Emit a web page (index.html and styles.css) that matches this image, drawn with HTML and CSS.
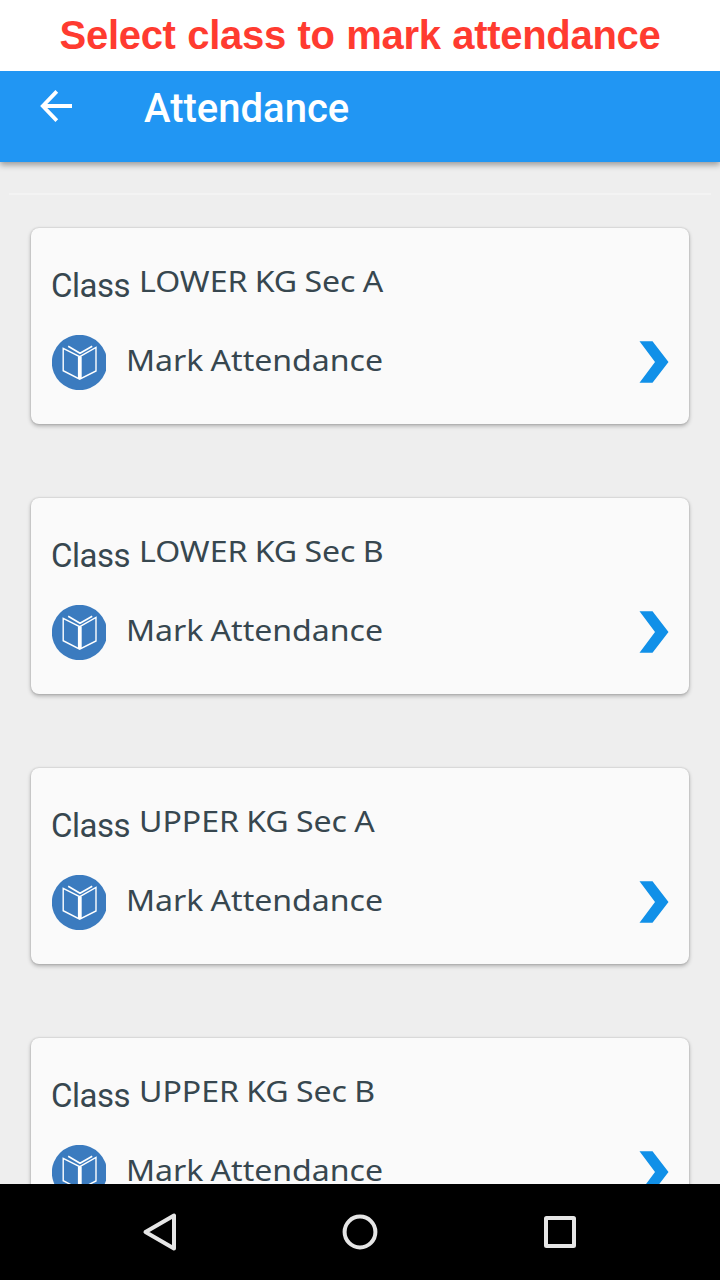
FILE: index.html
```html
<!DOCTYPE html>
<html lang="en">
<head>
<meta charset="utf-8">
<title>Attendance</title>
<link rel="stylesheet" href="styles.css">
</head>
<body>
<svg width="0" height="0" class="symbols" aria-hidden="true">
  <symbol id="book" viewBox="0 0 54 55">
    <circle cx="27.5" cy="27.5" r="27.7" fill="#3b7bbf"/>
    <path d="M11.2 13.3 27.7 21.6 44 12.4V36L27.7 44.2 11.2 35.7Z" fill="none" stroke="#fff" stroke-width="1.4"/>
    <path d="M16.2 11.2 28 18.2 40.2 11.2" fill="none" stroke="#fff" stroke-width="1.6"/>
    <path d="M27.8 21.5V44" stroke="#fff" stroke-width="3.8"/>
  </symbol>
  <symbol id="chevron" viewBox="0 0 30 42">
    <path d="M.5.2H13.5L29.5 21 13.5 41.8H.5L16 21Z" fill="#1190e8"/>
  </symbol>
</svg>
<div class="screen">
  <h1 class="caption"><span>Select class to mark attendance</span></h1>
  <header class="appbar">
    <svg class="back" viewBox="0 0 32 32"><path d="M32 16H3M16.8 1.4 2.8 16l14 14.6" fill="none" stroke="#fff" stroke-width="3.8"/></svg>
    <h2 class="title">Attendance</h2>
  </header>
  <main class="list">
    <hr class="rule">
    <section class="card">
      <div class="class-row"><span class="label">Class</span><span class="name">LOWER KG Sec A</span></div>
      <div class="action"><svg class="book"><use href="#book"/></svg><span class="text">Mark Attendance</span><svg class="chevron"><use href="#chevron"/></svg></div>
    </section>
    <section class="card">
      <div class="class-row"><span class="label">Class</span><span class="name">LOWER KG Sec B</span></div>
      <div class="action"><svg class="book"><use href="#book"/></svg><span class="text">Mark Attendance</span><svg class="chevron"><use href="#chevron"/></svg></div>
    </section>
    <section class="card">
      <div class="class-row"><span class="label">Class</span><span class="name">UPPER KG Sec A</span></div>
      <div class="action"><svg class="book"><use href="#book"/></svg><span class="text">Mark Attendance</span><svg class="chevron"><use href="#chevron"/></svg></div>
    </section>
    <section class="card">
      <div class="class-row"><span class="label">Class</span><span class="name">UPPER KG Sec B</span></div>
      <div class="action"><svg class="book"><use href="#book"/></svg><span class="text">Mark Attendance</span><svg class="chevron"><use href="#chevron"/></svg></div>
    </section>
  </main>
  <nav class="navbar">
    <svg viewBox="0 0 40 40"><path d="M34 3.5V36.5L5.5 20Z"/></svg>
    <svg viewBox="0 0 40 40"><circle cx="20" cy="20" r="15.4"/></svg>
    <svg viewBox="0 0 40 40"><rect x="6" y="6" width="28" height="28" rx=".5"/></svg>
  </nav>
</div>
</body>
</html>
```
FILE: styles.css
```css
* { box-sizing: border-box; }
body { margin: 0; }
.symbols { display: none; }
.screen {
  display: flex;
  flex-direction: column;
  width: 720px;
  height: 1280px;
  overflow: hidden;
  background: #eee;
}
.caption {
  flex: none;
  height: 71px;
  margin: 0;
  background: #fff;
  color: #ff3b30;
  font: bold 40px/71px "Liberation Sans", sans-serif;
  letter-spacing: -.3px;
  word-spacing: .8px;
  text-align: center;
  white-space: nowrap;
  z-index: 2;
}
.appbar {
  display: flex;
  flex: none;
  gap: 72px;
  height: 91px;
  padding: 19px 40px 0;
  background: #2196f3;
  box-shadow: 0 3px 6px rgba(0, 0, 0, .35);
  z-index: 1;
}
.back { width: 32px; height: 32px; }
.title {
  margin: 0;
  color: #fff;
  font: 500 40px/38px Roboto, sans-serif;
}
.list {
  flex: 1;
  min-height: 0;
  overflow: hidden;
  padding-top: 31px;
}
.rule {
  height: 2px;
  margin: 0 9px 33px;
  border: 0;
  background: #f3f3f3;
}
.card {
  height: 196px;
  margin: 0 31px 74px;
  padding: 34px 20px 0;
  border-radius: 8px;
  background: #fafafa;
  box-shadow: 0 2px 4px rgba(0, 0, 0, .28), 0 0 2px rgba(0, 0, 0, .2);
  color: #37474f;
}
.class-row {
  display: flex;
  height: 40px;
  gap: 10px;
  white-space: nowrap;
}
.label {
  width: 78px;
  font: 33px/47px Roboto, sans-serif;
  letter-spacing: -.5px;
}
.name, .text {
  font: 29px/38px "Noto Sans", sans-serif;
  word-spacing: -1px;
  white-space: nowrap;
  transform: scaleX(1.105);
  transform-origin: left;
}
.action {
  display: flex;
  margin-top: 33px;
}
.book { width: 54px; height: 55px; margin-left: 1px; }
.text { margin: 6px 0 0 20px; }
.chevron { width: 30px; height: 42px; margin: 6px 0 0 auto; }
.navbar {
  display: flex;
  flex: none;
  align-items: center;
  justify-content: center;
  gap: 160px;
  height: 96px;
  background: #000;
}
.navbar svg {
  width: 40px;
  height: 40px;
  fill: none;
  stroke: #e6e6e6;
  stroke-width: 4;
  stroke-linejoin: round;
}
```
